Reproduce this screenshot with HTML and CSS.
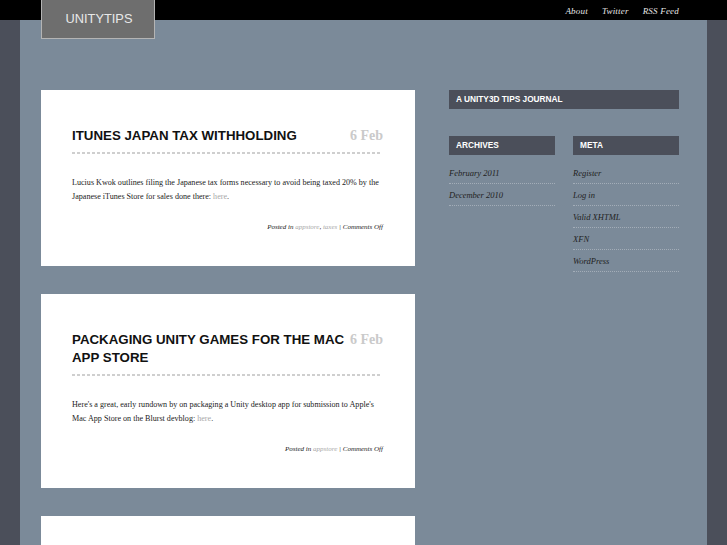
FILE: index.html
```html
<!DOCTYPE html>
<html>
    <head>
        <link rel="stylesheet" href="styles.css">
    </head>
    <body>

        <div class="page">
            <div class="header">
                <div class="logo">UNITYTIPS</div>
                <div class="nav">
                    <a href="#">About</a>
                    <a href="#">Twitter</a>
                    <a href="#">RSS Feed</a>
                </div>
            </div>

            <div class="main">
                <div class="posts">
                    <div class="post">
                        <div class="posthead">
                            <h2>ITUNES JAPAN TAX WITHHOLDING</h2>
                            <span class="date">6 Feb</span>
                        </div>
                        <p>Lucius Kwok outlines filing the Japanese tax forms necessary to avoid being taxed 20% by the Japanese iTunes Store for sales done there: <a href="#">here</a>.</p>
                        <div class="meta">Posted in <a href="#">appstore</a>, <a href="#">taxes</a> | Comments Off</div>
                    </div>
                    <div class="post">
                        <div class="posthead">
                            <h2>PACKAGING UNITY GAMES FOR THE MAC APP STORE</h2>
                            <span class="date">6 Feb</span>
                        </div>
                        <p>Here's a great, early rundown by on packaging a Unity desktop app for submission to Apple's Mac App Store on the Blurst devblog: <a href="#">here</a>.</p>
                        <div class="meta">Posted in <a href="#">appstore</a> | Comments Off</div>
                    </div>
                    <div class="post"></div>
                </div>

                <div class="sidebar">
                    <h3>A UNITY3D TIPS JOURNAL</h3>
                    <div class="columns">
                        <div class="widget">
                            <h3>ARCHIVES</h3>
                            <ul>
                                <li>February 2011</li>
                                <li>December 2010</li>
                            </ul>
                        </div>
                        <div class="widget">
                            <h3>META</h3>
                            <ul>
                                <li>Register</li>
                                <li>Log in</li>
                                <li>Valid XHTML</li>
                                <li>XFN</li>
                                <li>WordPress</li>
                            </ul>
                        </div>
                    </div>
                </div>
            </div>
        </div>

    </body>
</html>
```

FILE: styles.css
```css
* { margin: 0; padding: 0; box-sizing: border-box; }
html, body { width: 100%; height: 100%; overflow: hidden; }
body { background: linear-gradient(#000 20px, #4b4f5a 20px); font-family: "Liberation Serif", serif; }
a { text-decoration: none; }

.page { margin: 0 20px; min-height: 100%; background: linear-gradient(#000 20px, #7b8a99 20px); }

.header { display: flex; justify-content: space-between; align-items: flex-start; padding: 0 28px 0 21px; }
.logo { width: 114px; height: 39px; background: #6e6e6e; border: 1px solid #b4b4b4; border-top: none; color: #e8e8e8; font-family: "Liberation Sans", sans-serif; font-size: 12.8px; display: flex; align-items: center; justify-content: center; padding: 0 0 1px 2px; }
.nav { display: flex; gap: 14px; height: 20px; align-items: center; padding-top: 1px; }
.nav a { color: #e6e6e6; font-style: italic; font-size: 9px; letter-spacing: 0.2px; }

.main { display: flex; padding: 51px 0 0 21px; }
.posts { width: 374px; display: flex; flex-direction: column; gap: 28px; }
.post { background: #fff; padding: 37px 32px 35px 31px; min-height: 60px; }
.posthead { display: flex; align-items: flex-start; padding-bottom: 9px; margin-right: -3px; background: repeating-linear-gradient(90deg, #cfcfcf 0 3px, transparent 3px 5px) left bottom / 308px 2px no-repeat; }
.posthead h2 { flex: 1; font-family: "Liberation Sans", sans-serif; font-size: 13.3px; line-height: 18px; color: #111; }
.date { color: #cacaca; font-size: 14px; font-weight: bold; line-height: 18px; padding-right: 3px; }
.post p { font-size: 8.1px; line-height: 14px; color: #222; margin-top: 22px; }
.post p a, .meta a { color: #a8a8a8; }
.meta { text-align: right; font-style: italic; font-size: 7px; color: #222; margin-top: 19px; }

.sidebar { width: 230px; margin-left: 34px; }
.sidebar h3 { background: #4b4f5a; color: #fff; font-family: "Liberation Sans", sans-serif; font-size: 8.3px; height: 19px; line-height: 19px; padding-left: 7px; }
.columns { display: flex; gap: 18px; margin-top: 27px; }
.widget { flex: 1; }
.widget ul { list-style: none; margin-top: 7px; }
.widget li { font-style: italic; font-size: 8.5px; color: #222; height: 22px; line-height: 22px; border-bottom: 1px dotted #a3adb8; }
```
